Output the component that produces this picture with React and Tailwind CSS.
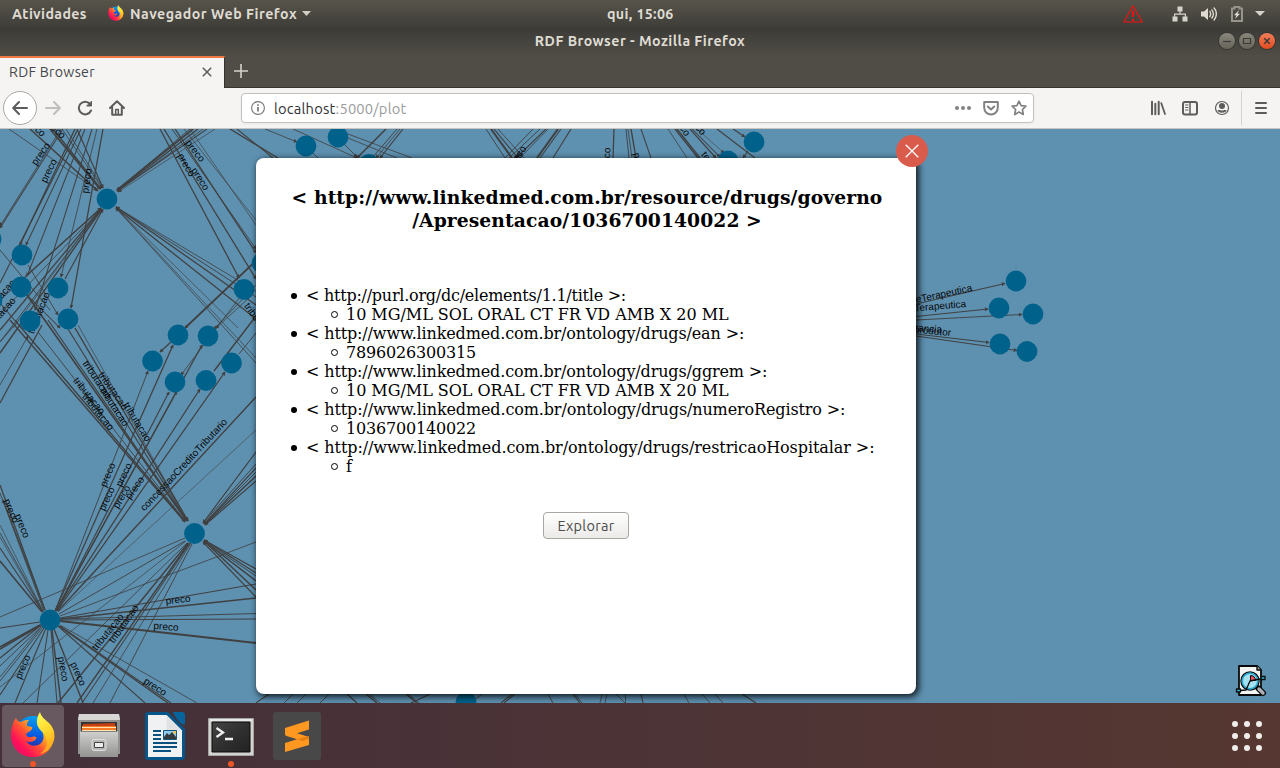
import React from 'react';

const UI = "font-['Ubuntu','Noto_Sans',sans-serif]";

const NODES = [
  [107, 199], [194.5, 533.5], [50, 620], [22, 255], [21, 287], [58, 288], [30, 321], [68, 319],
  [-9, 239], [-8, 300], [178, 335], [208, 336], [152.5, 361], [175, 382], [206, 380.5], [231.5, 363],
  [244, 289.5], [262, 263], [306, 146], [338, 137], [369, 164.5], [754, 142], [728, 161], [466, 702],
  [1016, 281], [999, 308], [1033, 314], [1000, 344], [1027, 351.5],
];

const EDGES = [
  [9, 129, 97, 190, .7], [30, 129, 98, 191, 1.3], [50, 129, 100, 189, 1.6], [53, 129, 101, 189, 1.2], [62, 129, 102, 188, .7], [66, 129, 103, 188, .7], [77, 129, 103, 188, 1],
  [190, 129, 117, 190, .8], [193, 129, 117, 190, 1.5], [198, 129, 117, 191, 1.2], [203, 129, 118, 191, .7], [207, 129, 117, 191, .9], [215, 129, 118, 192, .6],
  [256, 291, 116, 207, .7], [256, 297, 116, 207, .8], [256, 305, 116, 207, 1.1], [256, 319, 116, 208, 1.1], [238, 328, 116, 208, .6], [256, 363, 116, 208, .7], [256, 358, 116, 208, .6],
  [25, 277, 101, 208, 1.2], [0, 300, 101, 208, .8], [0, 314, 101, 209, .7], [0, 330, 101, 209, 1.1], [0, 342, 101, 209, .8], [0, 353, 102, 209, 1.2], [13, 328, 101, 209, .6],
  [63, 129, 0, 228, .9], [61, 129, 0, 226, .7], [78, 129, 0, 283, 1], [75, 129, 20, 245, 1.1], [81, 129, 26, 245, .9], [85, 129, 27, 276, .9], [92, 129, 35, 310, .9], [97, 129, 61, 277, .7], [103, 129, 71, 308, 1.1], [65, 279, 103, 209, 1],
  [160, 129, 239, 278, 1.1], [164, 129, 256, 279, 1.1], [172, 129, 256, 249, .8], [175, 129, 256, 253, 1.1], [184, 129, 256, 220, .6], [190, 129, 256, 225, .6], [230, 129, 278, 158, 1.2], [237, 129, 273, 158, .9],
  [262, 255, 185, 328, 1.5], [171, 342, 160, 352, 1], [250, 297, 216, 328, .7], [240, 297, 181, 375, .7], [256, 285, 214, 329, .7],
  [0, 250, 50, 310, .8], [28, 265, 58, 315, .8], [27, 295, 60, 328, .9], [0, 303, 185, 521, .9], [10, 320, 185, 522, 1.2], [15, 320, 185, 521, .9], [38, 332, 185, 521, .8], [27, 295, 186, 520, 1.4], [48, 320, 187, 521, 1], [68, 329, 187, 521, 1], [75, 328, 188, 521, 1.2], [78, 325, 188, 521, .6],
  [42, 325, 0, 403, 1.1], [0, 385, 28, 336, .7], [18, 321, 0, 342, .8],
  [55, 611, 148, 371, .8], [55, 611, 173, 345, 1.1], [56, 611, 202, 345, 1.1], [56, 611, 169, 392, 1], [56, 611, 177, 391, 1], [56, 611, 200, 389, 1.1], [57, 611, 225, 372, 1.1], [214, 371, 256, 316, 1.2], [239, 354, 256, 333, .8], [58, 611, 256, 397, 1.2], [58, 612, 256, 430, .5],
  [256, 452, 203, 523, 1], [256, 464, 203, 523, .8], [256, 468, 204, 524, 1], [256, 472, 204, 524, .8], [256, 476, 205, 524, 1.3], [256, 481, 205, 525, 1],
  [0, 485, 45, 610, 1.1], [3, 500, 45, 610, 1], [0, 493, 44, 611, .8], [0, 525, 43, 611, .6], [0, 533, 43, 611, .8], [0, 537, 43, 612, .6], [0, 548, 43, 612, 1], [0, 561, 42, 612, 1.3],
  [60, 618, 256, 584, .9], [60, 619, 256, 598, 1.3], [60, 619, 256, 613.5, .8], [60, 620, 256, 619, 1], [60, 621, 256, 643, 1.7], [60, 616, 256, 542, .7], [185, 541, 59, 614, .8], [185, 538, 0, 617, .7],
  [186, 541, 0, 687, .6], [187, 543, 23, 703, .7], [188, 543, 58, 703, 1.2], [189, 543, 77, 703, 1.2], [190, 543, 82, 703, .9], [191, 543, 93, 703, .7], [192, 544, 110, 703, .8],
  [40, 622, 0, 628, 1], [40, 625, 0, 647, 1.5], [41, 625, 0, 649, 1.3], [41, 625, 0, 658, 1.1], [42, 626, 0, 666, .8], [42, 626, 0, 677, .7], [43, 627, 0, 681, .8], [44, 628, 0, 695, .9], [46, 628, 15, 703, 1], [48, 630, 37, 703, .9], [51, 630, 57, 703, .9], [52, 630, 61, 703, 1.3], [54, 629, 83, 703, 1.2],
  [58, 626, 145, 703, .9], [59, 626, 168, 703, 1.2], [60, 626, 171, 703, .9], [60, 625, 197, 703, .7],
  [256, 569, 204, 540, 1], [256, 573, 204, 540, 1], [256, 576, 204, 541, .8], [256, 581, 204, 541, 1.3], [256, 590, 204, 541, 1.2], [256, 597, 203, 542, 1],
  [265, 129, 297, 142, .7], [293, 129, 357, 158, .7], [348, 134, 412, 158, .7], [348, 138, 397, 158, .7], [386, 129, 357, 158, 1.3], [397, 129, 372, 158, .8], [400, 129, 376, 158, .7], [403, 129, 380, 158, 1], [345, 145, 357, 157, .8], [313, 153, 318, 158, .7],
  [486, 129, 505, 158, .8], [491, 129, 512, 158, 1.7], [494, 129, 518, 158, 1], [498, 129, 524, 158, .7], [533, 129, 505, 158, .8], [540, 129, 509, 158, .8], [546, 129, 516, 158, 1], [548, 129, 520, 158, .7], [558, 129, 537, 158, 1.8], [561, 129, 540, 158, .9], [571, 129, 553, 158, 1],
  [614, 129, 613, 158, 1.1], [626, 129, 629, 158, .8], [628, 129, 632, 158, .7], [631, 129, 636, 158, 1.2], [641, 129, 651, 158, .9], [668, 129, 687, 158, .7], [675, 129, 698, 158, 1.1], [677, 129, 700, 158, 1.2], [692, 129, 720, 157, .9], [697, 129, 724, 153, .5], [690, 129, 716, 158, 1], [717, 129, 755, 158, 1], [733, 129, 745, 137, 1], [748, 151, 743, 158, 1],
  [916, 304, 1005, 283.5, .9], [916, 316.5, 988, 309, .9], [916, 320, 1022, 314.5, .8], [916, 334, 989, 342.5, .9], [916, 336, 1017, 350.5, .9],
  [269, 694, 256, 703, .9], [293, 694, 284, 703, .7], [306, 694, 297, 703, .7], [329, 694, 320, 703, .8], [347, 694, 357, 703, 1.1], [366, 694, 377, 703, 1.2], [369, 694, 380, 703, .8], [406, 694, 417, 703, 1.2], [408, 694, 419, 703, .8], [430, 694, 411, 703, 1], [482, 694, 476, 699, .8],
  [512, 694, 501, 703, 1], [515, 694, 504, 703, .9], [548, 694, 553, 703, .8], [573, 694, 580, 703, 1], [575, 694, 582, 703, .7], [602, 694, 600, 703, .7], [607, 694, 605, 703, .7], [616, 694, 625, 703, .7], [625.5, 694, 625.5, 703, .7], [641, 694, 643, 703, .9], [684, 694, 689, 703, .7], [702, 694, 710, 703, .7], [715, 694, 723, 703, .7], [742, 694, 756, 703, 1],
];

const LABELS = [
  ['preco', 41, 154, -55], ['preco', 49, 171, -64], ['preco', 87, 181, -82], ['preco', 195, 151, 52], ['preco', 186, 165, 60], ['preco', 200, 179, 57],
  ['tributacao', 39, 313, -68], ['tributacao', 259, 322, 54],
  ['tributacao', 97, 380, 56], ['tributacao', 113, 391, 55], ['tributacao', 89, 396, 51], ['tributacao', 98, 412, 51], ['tributacao', 114, 407, 57], ['tributacao', 137, 422, 59],
  ['preco', 108, 475, -67], ['preco', 107, 499, -65], ['preco', 124, 475, -65], ['preco', 122, 497, -60], ['preco', 135, 488, -55], ['concessaoCreditoTributario', 184, 465, -47],
  ['preco', 11, 511, 68], ['preco', 22, 526, 68], ['preco', 178, 600, -6], ['preco', 166, 627, 4], ['tributacao', 108, 632, -51], ['tributacao', 124, 624, -55],
  ['preco', 23, 667, -67], ['preco', 63, 669, 80], ['preco', 78, 674, 66], ['preco', 155, 687, 33],
  ['preco', 514, 163, -58], ['preco', 517, 157, -54], ['preco', 607, 160, -88], ['preco', 639, 165, 76], ['temTarja', 715, 168, 52],
];

const END_LABELS = [
  ['preco', 44, 135, 42], ['preco', 64, 137, 42], ['tributacao', 14, 281, -48], ['tributacao', 14, 299, -48],
  ['preco', 688, 135, 55], ['preco', 704, 134, 48],
  ['classeTerapeutica', 972, 288, -12], ['classeTerapeutica', 966, 304, -5], ['substancia', 942, 330, 4], ['produtor', 951, 333, 5],
];

function GraphLabel({ d, end }) {
  return (
    <text transform={`translate(${d[1]} ${d[2]}) rotate(${d[3]})`} textAnchor={end ? 'end' : 'middle'} y="3">{d[0]}</text>
  );
}

const reachesNode = (e) => e[3] < 605 && NODES.some((n) => Math.hypot(n[0] - e[2], n[1] - e[3]) < 16);

function Graph() {
  return (
    <svg className="h-full w-full" viewBox="0 129 1280 574">
      <defs>
        <marker id="arrow" viewBox="0 0 6 6" refX="5" refY="3" markerWidth="4" markerHeight="4" markerUnits="userSpaceOnUse" orient="auto">
          <path d="M0 0L6 3L0 6Z" fill="#404040" />
        </marker>
      </defs>
      <g stroke="#404040">
        {EDGES.map((e, i) => (
          <line key={i} x1={e[0]} y1={e[1]} x2={e[2]} y2={e[3]} strokeWidth={e[4] * 1.15} markerEnd={reachesNode(e) ? 'url(#arrow)' : undefined} />
        ))}
      </g>
      <g fill="#080808" className="font-['Liberation_Sans',sans-serif] text-[10px]">
        {LABELS.map((d, i) => <GraphLabel key={i} d={d} />)}
        {END_LABELS.map((d, i) => <GraphLabel key={i} d={d} end />)}
      </g>
      <g fill="#00628b">
        {NODES.map((n, i) => <circle key={i} cx={n[0]} cy={n[1]} r="10.4" />)}
      </g>
    </svg>
  );
}

function FirefoxLogo({ className, id }) {
  return (
    <svg className={className} viewBox="0 0 44 46">
      <defs>
        <linearGradient id={id + 'a'} x1=".95" y1=".15" x2=".1" y2=".9">
          <stop offset="0" stopColor="#fff44f" /><stop offset=".3" stopColor="#ffb01f" /><stop offset=".55" stopColor="#ff4f35" /><stop offset=".8" stopColor="#ff1158" /><stop offset="1" stopColor="#e0106c" />
        </linearGradient>
        <linearGradient id={id + 'b'} x1=".6" y1="0" x2=".4" y2="1">
          <stop offset="0" stopColor="#00a3f4" /><stop offset=".5" stopColor="#0a5ce0" /><stop offset="1" stopColor="#30208c" />
        </linearGradient>
        <linearGradient id={id + 'c'} x1=".3" y1="0" x2=".6" y2="1">
          <stop offset="0" stopColor="#fff84f" /><stop offset=".5" stopColor="#ffd62e" /><stop offset="1" stopColor="#ff9a16" />
        </linearGradient>
      </defs>
      <circle cx="22" cy="22.5" r="18.5" fill={`url(#${id}b)`} />
      <path d="M5 6C6 9 8 10 10 10C13 8 16 8 18 8C16 10 16 12 16 14L21 15C22 17 20 19 16 21C14 24 17 26 21 25C24 24 26 25 25 27C23 30 18 31 15 29C18 34 24 35 29 32C34 28 33 22 30 17L32 12L42 17C45 29 39 45 22 45C8 45 0 35 0 23C0 16 2 10 5 6Z" fill={`url(#${id}a)`} />
      <path d="M29 0C30 5 35 8 39 12C44 18 45 26 41 33C39 37 34 41 29 42C36 37 38 31 35 25C33 20 25 17 26 9C26 6 27 3 29 0Z" fill={`url(#${id}c)`} />
    </svg>
  );
}

function TopBar() {
  return (
    <header className="flex h-7 items-center bg-gradient-to-b from-[#57544a] to-[#3e3d38] pb-px text-[14.2px] font-bold text-[#dfdbd2]">
      <div className="flex w-[607px] items-center pl-3">
        <span className="w-[96px] pt-0.5 tracking-[0.4px]">Atividades</span>
        <FirefoxLogo id="fs" className="h-4 w-4" />
        <span className="ml-1.5 pt-0.5 tracking-[0.5px] whitespace-nowrap">Navegador Web Firefox</span>
        <svg className="ml-[5px] h-[5px] w-[9px]" viewBox="0 0 9 5"><path d="M0 0H9L4.5 5Z" fill="#d0cdc5" /></svg>
      </div>
      <span className="w-[516px] pt-0.5 tracking-[0.36px]">qui, 15:06</span>
      <div className="flex items-center">
        <svg className="h-[18px] w-5" viewBox="0 0 20 18" fill="none"><path d="M10 1L19.2 17H.8Z" stroke="#f01212" strokeWidth="1.2" /><path d="M10 6V12M10 14V16" stroke="#f01212" strokeWidth="2" /></svg>
        <svg className="ml-[29px] h-4 w-4" viewBox="0 0 16 16"><path d="M5.5 0.5H10.5V5.5H8.6V7.5H14V10.5H15.5V15.5H10.5V10.5H12.8V8.7H3.2V10.5H5.5V15.5H.5V10.5H2V7.5H7.4V5.5H5.5Z" fill="#d6d3cb" /></svg>
        <svg className="ml-[13px] h-4 w-4" viewBox="0 0 16 16"><path d="M0 5.5H3L7 2V14L3 10.5H0Z" fill="#dfdbd2" /><path d="M8.5 5C10 6.5 10 9.5 8.5 11M10.5 3.5C13 6 13 10 10.5 12.5M12.7 1.5C16.2 5 16.2 11 12.7 14.5" fill="none" stroke="#dfdbd2" strokeWidth="1.4" /></svg>
        <svg className="ml-[14px] h-4 w-3" viewBox="0 0 12 16"><path d="M1 2.5H3.5V1H8.5V2.5H11V15H1Z" fill="none" stroke="#96948b" strokeWidth="2" /><path d="M8 4L3 9.2H5.5L4 13L9 7.8H6.5Z" fill="#e2dfd6" /></svg>
        <svg className="ml-3 h-[5px] w-[10px]" viewBox="0 0 10 5"><path d="M0 0H10L5 5Z" fill="#d6d3cb" /></svg>
      </div>
    </header>
  );
}

function WindowButton({ close, children }) {
  return (
    <span className={`flex h-4 w-4 items-center justify-center rounded-full shadow-[0_0_0_1px_#353430] ${close ? 'bg-gradient-to-b from-[#f27d58] to-[#e04a1c]' : 'bg-gradient-to-b from-[#8a877d] to-[#666359]'}`}>
      <svg className="h-4 w-4" viewBox="0 0 16 16" fill="none" stroke="#3b3a36" strokeWidth="1.2">{children}</svg>
    </span>
  );
}

function TitleBar() {
  return (
    <div className="grid h-7 grid-cols-[1fr_auto_1fr] items-center bg-gradient-to-b from-[#3c3b37] to-[#504d46] pb-0.5 text-[#dfdbd2]">
      <span />
      <span className="pt-0.5 text-[14.2px] font-bold tracking-[0.46px]">RDF Browser - Mozilla Firefox</span>
      <div className="flex justify-end gap-1 pr-[5px]">
        <WindowButton><path d="M4 8.5H12" /></WindowButton>
        <WindowButton><path d="M4.5 5.5H11.5V10.5H4.5Z" /></WindowButton>
        <WindowButton close><path d="M5.3 5.3L10.7 10.7M10.7 5.3L5.3 10.7" strokeWidth="1.5" /></WindowButton>
      </div>
    </div>
  );
}

function Tabs() {
  return (
    <div className="flex h-8 bg-[#504d46]">
      <div className="flex w-[225px] items-center border-t-2 border-r border-[#f07746] border-r-[#33322e] bg-[#f5f4f2] pb-0.5 pl-[9px] text-[#45474a]">
        <span className="w-[193px] pt-0.5 text-[14.2px] tracking-[0.3px]">RDF Browser</span>
        <svg className="h-[10px] w-[10px]" viewBox="0 0 10 10"><path d="M.8.8L9.2 9.2M9.2.8L.8 9.2" stroke="#5a5b5c" strokeWidth="1.5" /></svg>
      </div>
      <div className="flex flex-1 items-center border-b border-[#35342f] pb-px pl-[9px]">
        <svg className="h-[14px] w-[14px]" viewBox="0 0 14 14"><path d="M0 7H14M7 0V14" stroke="#d5d2ca" strokeWidth="1.6" /></svg>
      </div>
    </div>
  );
}

function Icon({ children, className = '' }) {
  return (
    <svg className={`h-4 w-4 shrink-0 ${className}`} viewBox="0 0 16 16" fill="none" stroke="#5c5c5b" strokeWidth="2" strokeLinecap="round" strokeLinejoin="round">{children}</svg>
  );
}

function Toolbar() {
  return (
    <div className="flex h-[41px] items-center border-b border-[#c9c5c0] bg-[#f5f4f2]">
      <div className="flex w-[241px] items-center pl-[3px]">
        <span className="flex h-[34px] w-[34px] items-center justify-center rounded-full border border-[#aaa9a7] bg-white">
          <Icon><path d="M15 8H1.5M7 2L1.2 8L7 14" /></Icon>
        </span>
        <Icon className="ml-2 opacity-35"><path d="M1 8H14.5M9 2L14.8 8L9 14" /></Icon>
        <Icon className="ml-4"><path d="M14 10.5A6.3 6.3 0 1 1 13 4" /><path d="M14.5 1.5V6H10Z" fill="#5c5c5b" strokeWidth="1" /></Icon>
        <Icon className="ml-4"><path d="M1 8L8 1.2L15 8M3.2 7.5V14.8H12.8V7.5" /><path d="M6.7 14V9.5H9.3V14" strokeWidth="1.5" strokeLinecap="butt" /></Icon>
      </div>
      <div className="flex h-[30px] w-[793px] items-center rounded-[4px] border border-[#c3c1be] bg-white pl-[9px] shadow-[0_1px_3px_rgba(0,0,0,.05)]">
        <svg className="h-[14px] w-[14px]" viewBox="0 0 14 14" fill="none" stroke="#777"><circle cx="7" cy="7" r="6.4" strokeWidth="1.1" /><path d="M7 6V10.6M7 3.2V4.8" strokeWidth="1.7" /></svg>
        <span className="ml-[9px] w-[681px] pt-0.5 text-[14.7px] tracking-[0.2px] text-[#303234]">localhost<span className="text-[#9a9b9c]">:5000/plot</span></span>
        <svg className="h-4 w-4" viewBox="0 0 16 16" fill="#828282"><circle cx="2" cy="8" r="2" /><circle cx="8" cy="8" r="2" /><circle cx="14" cy="8" r="2" /></svg>
        <Icon className="ml-3 stroke-[#828282]"><path d="M1.2 2H14.8V7.5C14.8 16.8 1.2 16.8 1.2 7.5Z" /><path d="M4.8 6.5L8 9.5L11.2 6.5" /></Icon>
        <Icon className="ml-3 stroke-[#828282]"><path d="M8 1.2L10.1 5.6L14.9 6.1L11.4 9.5L12.3 14.5L8 12.1L3.7 14.5L4.6 9.5L1.1 6.1L5.9 5.6Z" strokeWidth="1.7" /></Icon>
      </div>
      <div className="flex flex-1 items-center pl-[116px]">
        <Icon><path d="M2 1.8V14.2M5.3 3.8V14.2M8.7 1.8V14.2" /><path d="M11.3 3.2L15 14" strokeWidth="1.8" /></Icon>
        <Icon className="ml-4"><rect x="1" y="2" width="14" height="12.5" rx="2" /><path d="M8 2V14" strokeWidth="1.5" /><path d="M3.5 5H6M3.5 7.5H6M3.5 10H6" strokeWidth="1" /></Icon>
        <Icon className="ml-4"><circle cx="8" cy="8" r="6.5" strokeWidth="1.2" /><circle cx="8" cy="6" r="3" fill="#5c5c5b" strokeWidth="0" /><path d="M3.5 10.5C5 9.5 6 10.5 8 10.5S11 9.5 12.5 10.5C11 13.5 5 13.5 3.5 10.5Z" fill="#5c5c5b" strokeWidth="0" /></Icon>
        <span className="ml-[11px] h-[34px] w-px bg-[#d4d3d1]" />
        <Icon className="ml-[11px]"><path d="M3 3H13M3 8H13M3 13H13" /></Icon>
      </div>
    </div>
  );
}

const DETAILS = [
  { property: '< http://purl.org/dc/elements/1.1/title >:', tracking: 'tracking-[-0.245px]', value: '10 MG/ML SOL ORAL CT FR VD AMB X 20 ML', valueTracking: 'tracking-[-0.03px]' },
  { property: '< http://www.linkedmed.com.br/ontology/drugs/ean >:', tracking: 'tracking-[-0.135px]', value: '7896026300315', valueTracking: 'tracking-[-0.17px]' },
  { property: '< http://www.linkedmed.com.br/ontology/drugs/ggrem >:', tracking: 'tracking-[-0.135px]', value: '10 MG/ML SOL ORAL CT FR VD AMB X 20 ML', valueTracking: 'tracking-[-0.03px]' },
  { property: '< http://www.linkedmed.com.br/ontology/drugs/numeroRegistro >:', tracking: 'tracking-[-0.125px]', value: '1036700140022', valueTracking: 'tracking-[-0.17px]' },
  { property: '< http://www.linkedmed.com.br/ontology/drugs/restricaoHospitalar >:', tracking: 'tracking-[-0.08px]', value: 'f', valueTracking: 'tracking-normal' },
];

function Modal() {
  return (
    <section className="absolute top-[29px] left-64 flex h-[536px] w-[660px] flex-col items-center rounded-lg bg-white pt-7 font-['DejaVu_Serif',serif] text-black shadow-[2px_2px_6px_1px_#000c]">
      <button className="absolute -top-[23px] -right-3 flex h-8 w-8 items-center justify-center rounded-full bg-[#d95b4c]">
        <svg className="h-[14px] w-[14px]" viewBox="0 0 14 14"><path d="M.7.7L13.3 13.3M13.3.7L.7 13.3" stroke="#fff" strokeWidth="1.3" /></svg>
      </button>
      <h3 className="pl-0.5 text-center text-[18.72px] leading-[23px] font-bold tracking-[0.09px] whitespace-nowrap">&lt; http://www.linkedmed.com.br/resource/drugs/governo<br />/Apresentacao/1036700140022 &gt;</h3>
      <ul className="mt-[54px] w-full pl-[35px] text-[16px] leading-[19px]">
        {DETAILS.map((d) => (
          <li key={d.property}>
            <div className={`flex items-center whitespace-nowrap ${d.tracking}`}><span className="mr-[9px] h-1.5 w-1.5 rounded-full bg-black" />{d.property}</div>
            <div className={`flex items-center pl-10 whitespace-nowrap ${d.valueTracking}`}><span className="mr-2 h-[7px] w-[7px] rounded-full border border-black" />{d.value}</div>
          </li>
        ))}
      </ul>
      <button className={`mt-9 h-[27px] w-[86px] rounded-[4px] border border-[#aaa7a3] bg-gradient-to-b from-white to-[#ebeae8] text-[14.5px] leading-[25px] tracking-[0.3px] text-[#4c4c4c] ${UI}`}>Explorar</button>
    </section>
  );
}

function SearchReport() {
  return (
    <svg className="absolute top-[536px] left-[1235px] h-8 w-8" viewBox="0 0 32 32" strokeLinejoin="round" stroke="#0a0a0a">
      <path d="M4 1H22L26 5V30H4Z" fill="#f3f4f4" strokeWidth="1.8" /><path d="M22 1V5H26" fill="#aaa" strokeWidth="1.4" />
      <path d="M23.5 23.5L28 28" strokeWidth="6" strokeLinecap="round" /><path d="M24 24L28 28" stroke="#aeb0b6" strokeWidth="3.4" strokeLinecap="round" />
      <circle cx="15" cy="16" r="9" fill="#d9f3fb" strokeWidth="1.5" /><circle cx="15" cy="16" r="7.8" fill="#a5e2f2" stroke="#28a8cf" strokeWidth="1.7" />
      <path d="M15.5 10.5V15.5H20.5C20.5 12.5 18.5 10.5 15.5 10.5Z" fill="#e94c5c" strokeWidth="1" /><path d="M5 25.5L11 25L15 16L25 14" fill="none" strokeWidth="1.3" />
      <path d="M1.5 24H5.5V27H1.5ZM26 11.5H30V14.5H26Z" fill="#2cb8dd" strokeWidth="1.3" />
    </svg>
  );
}

function Dock() {
  return (
    <footer className="flex h-[65px] items-center bg-gradient-to-r from-[#43303a] to-[#563731] pl-0.5">
      <div className="flex h-[62px] w-[62px] flex-col items-center rounded-[4px] bg-[#685860] pt-[7px]">
        <FirefoxLogo id="fl" className="h-[47px] w-11" />
        <span className="mt-[3px] h-1.5 w-1.5 shrink-0 rounded-full bg-[#ef5525]" />
      </div>
      <svg className="ml-[13px] h-[46px] w-11" viewBox="0 0 44 46">
        <defs>
          <linearGradient id="cab" x2="0" y2="1"><stop stopColor="#d0d0ce" /><stop offset="1" stopColor="#929292" /></linearGradient>
        </defs>
        <path d="M2 1H42L43 6V41H1V6Z" fill="#929290" /><path d="M2 1H42L43 7H1Z" fill="#d7d6d4" /><path d="M4 9H40V20H4Z" fill="#333" />
        <path d="M6 11L38 10V14H5Z" fill="#c34017" /><path d="M5 13H39V17H5Z" fill="#f57a25" /><path d="M5 14H39V15H5ZM5 17H39V18H5Z" fill="#ffe2b0" />
        <path d="M3 18.5H41V44H3Z" fill="url(#cab)" /><rect x="15" y="26.5" width="14" height="11" rx="2" fill="#b8b8b6" stroke="#dfdfdf" /><path d="M17.5 29.5H26.5V34.5H17.5Z" fill="#eee" stroke="#444" />
      </svg>
      <svg className="ml-6 h-12 w-10" viewBox="0 0 40 48">
        <path d="M3 0H23L40 17V45Q40 48 37 48H3Q0 48 0 45V3Q0 0 3 0Z" fill="#075489" /><path d="M27.5 0H37Q40 0 40 3V12.5H37.5Q34 10 31.5 6.5Z" fill="#07649d" />
        <path d="M3 3H21.5L37 18.5V45H3Z" fill="#f0f1f2" /><path d="M21.5 3V18.5H37Z" fill="#e0e2e3" />
        <path d="M8 19H16M8 23H16M8 27H16M8 31H32M8 35H32M8 39H26" stroke="#075080" strokeWidth="2" />
        <path d="M18.5 18.5H31.5V27.5H18.5Z" fill="#91caef" stroke="#15577f" /><path d="M19 27V25L22 21L24 23L27 20L31 25V27Z" fill="#343a3b" /><circle cx="29.5" cy="20.5" r="1.4" fill="#f7c43e" />
      </svg>
      <div className="ml-[20px] flex h-[62px] w-[52px] flex-col items-center pt-[13px]">
        <svg className="h-[39px] w-[46px] shrink-0" viewBox="0 0 46 39">
          <defs><linearGradient id="term" x1="0" y1="0" x2="1" y2="1"><stop stopColor="#464646" /><stop offset=".5" stopColor="#303030" /><stop offset="1" stopColor="#222" /></linearGradient></defs>
          <path d="M.5.5H45.5V37.5H.5Z" fill="#d2d2d0" stroke="#a5a5a3" /><path d="M2 2H44" stroke="#fff" /><path d="M4 4H42V34H4Z" fill="url(#term)" stroke="#080808" />
          <path d="M8.5 10L15 14.5L8.5 19M17 21H25" fill="none" stroke="#f0f0f0" strokeWidth="2.3" />
        </svg>
        <span className="mt-1 h-1.5 w-1.5 shrink-0 rounded-full bg-[#ef5525]" />
      </div>
      <svg className="ml-4 h-12 w-12" viewBox="0 0 48 48">
        <rect width="48" height="48" rx="3" fill="#494848" />
        <path d="M12 16L36 8.5V17.5L24 21.2L34.5 24.5Q36 25 36 26.5V33L12 40V31L24 27.3L13.5 24Q12 23.5 12 22Z" fill="#ff9820" /><path d="M24 27.3L36 24V26.5L30 29Z" fill="#e67f11" />
      </svg>
      <div className="mr-[18px] ml-auto grid grid-cols-3 gap-1.5">
        {Array.from({ length: 9 }, (_, i) => <span key={i} className="h-1.5 w-1.5 rounded-full bg-[#f0eeeb]" />)}
      </div>
    </footer>
  );
}

export default function App() {
  return (
    <div className={`flex h-[768px] w-[1280px] flex-col overflow-hidden ${UI}`}>
      <TopBar />
      <TitleBar />
      <Tabs />
      <Toolbar />
      <main className="relative h-[574px] shrink-0 overflow-hidden bg-[#5e90b0]">
        <Graph />
        <SearchReport />
        <Modal />
      </main>
      <Dock />
    </div>
  );
}
